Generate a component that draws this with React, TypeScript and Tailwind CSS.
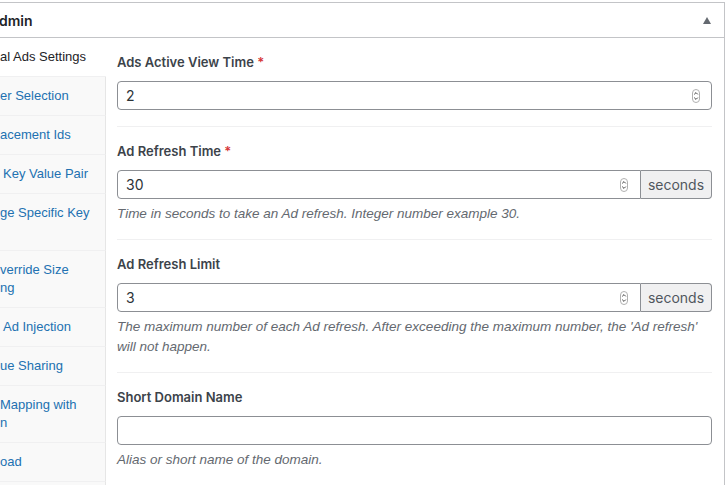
import React from "react";

const font = { fontFamily: "Inter, 'Noto Sans', Arial, sans-serif" };
const arial = { fontFamily: "'Liberation Sans', Arial, sans-serif" };

interface NavItem {
  lines: string[];
  indent?: boolean;
  active?: boolean;
}

const navItems: NavItem[] = [
  { lines: ["al Ads Settings"], active: true },
  { lines: ["er Selection"] },
  { lines: ["acement Ids"] },
  { lines: ["Key Value Pair"], indent: true },
  { lines: ["ge Specific Key", ""] },
  { lines: ["verride Size", "ng"] },
  { lines: ["Ad Injection"], indent: true },
  { lines: ["ue Sharing"] },
  { lines: ["Mapping with", "n"] },
  { lines: ["oad"] },
];

function Spinner() {
  return (
    <svg width="8" height="14" viewBox="0 0 8 14" className="shrink-0">
      <rect x="0.5" y="0.5" width="7" height="13" rx="3.5" fill="#fff" stroke="#b0b0b0" />
      <path d="M2.2 5.4 L4 3.6 L5.8 5.4" fill="none" stroke="#444" strokeWidth="1" />
      <path d="M2.2 8.6 L4 10.4 L5.8 8.6" fill="none" stroke="#444" strokeWidth="1" />
    </svg>
  );
}

function NumberInput({ value, suffix }: { value: string; suffix?: boolean }) {
  return (
    <div className="flex h-[29px]">
      <div
        className={`flex-1 flex items-center justify-between border border-[#8c8f94] bg-white pl-[8px] ${
          suffix ? "rounded-l-[4px] pr-[12px]" : "rounded-[4px] pr-[11px]"
        }`}
      >
        <span className="text-[14px] text-[#2c3338]">{value}</span>
        {value !== "" && <Spinner />}
      </div>
      {suffix && (
        <div className="w-[71px] flex items-center justify-center border border-l-0 border-[#8c8f94] bg-[#f0f0f1] rounded-r-[4px] text-[14px] text-[#50575e]">
          seconds
        </div>
      )}
    </div>
  );
}

function Field({
  label,
  required,
  value,
  suffix,
  desc,
  last,
}: {
  label: string;
  required?: boolean;
  value: string;
  suffix?: boolean;
  desc?: string;
  last?: boolean;
}) {
  return (
    <div className={`pt-[14px] ${desc ? "pb-[15px]" : "pb-[16px]"} ${last ? "" : "border-b border-[#f0f0f1]"}`}>
      <div className="h-[20px] leading-[20px] text-[13px] font-semibold text-[#3c434a]">
        {label}
        {required && <span className="text-[#d63638]"> *</span>}
      </div>
      <div className="mt-[9px]">
        <NumberInput value={value} suffix={suffix} />
      </div>
      {desc && (
        <p className="mt-[5px] leading-[20px] text-[13.5px] italic text-[#646970]" style={arial}>
          {desc}
        </p>
      )}
    </div>
  );
}

export default function App() {
  return (
    <div className="w-[728px] h-[485px] overflow-hidden bg-white pt-[2px]" style={font}>
      <div className="w-[725px] border-t border-r border-[#c3c4c7] bg-white">
        <div className="h-[35px] flex items-center justify-between border-b border-[#c3c4c7] pr-[13px]">
          <span className="text-[14px] font-semibold text-[#1d2327] -ml-[1px]">dmin</span>
          <svg width="8" height="7" viewBox="0 0 8 7">
            <path d="M4 0 L8 7 L0 7 Z" fill="#646970" />
          </svg>
        </div>
        <div className="flex">
          <div className="w-[106px] shrink-0 flex flex-col" style={arial}>
            {navItems.map((item, i) => (
              <div
                key={i}
                className={`py-[10px] border-b border-[#f0f0f1] text-[13px] leading-[18px] whitespace-nowrap ${
                  item.active
                    ? "bg-white text-[#1d2327]"
                    : "bg-[#f9f9f9] border-r border-r-[#e6e6e6] text-[#2271b1]"
                } ${item.indent ? "pl-[3px]" : ""}`}
              >
                {item.lines.map((l, j) => (
                  <div key={j} className="h-[18px]">
                    {l}
                  </div>
                ))}
              </div>
            ))}
            <div className="flex-1 bg-[#f9f9f9] border-r border-[#e6e6e6]" />
          </div>
          <div className="flex-1 pl-[11px] pr-[12px]">
            <Field label="Ads Active View Time" required value="2" />
            <Field
              label="Ad Refresh Time"
              required
              value="30"
              suffix
              desc="Time in seconds to take an Ad refresh. Integer number example 30."
            />
            <Field
              label="Ad Refresh Limit"
              value="3"
              suffix
              desc="The maximum number of each Ad refresh. After exceeding the maximum number, the 'Ad refresh' will not happen."
            />
            <Field label="Short Domain Name" value="" desc="Alias or short name of the domain." />
          </div>
        </div>
      </div>
    </div>
  );
}
